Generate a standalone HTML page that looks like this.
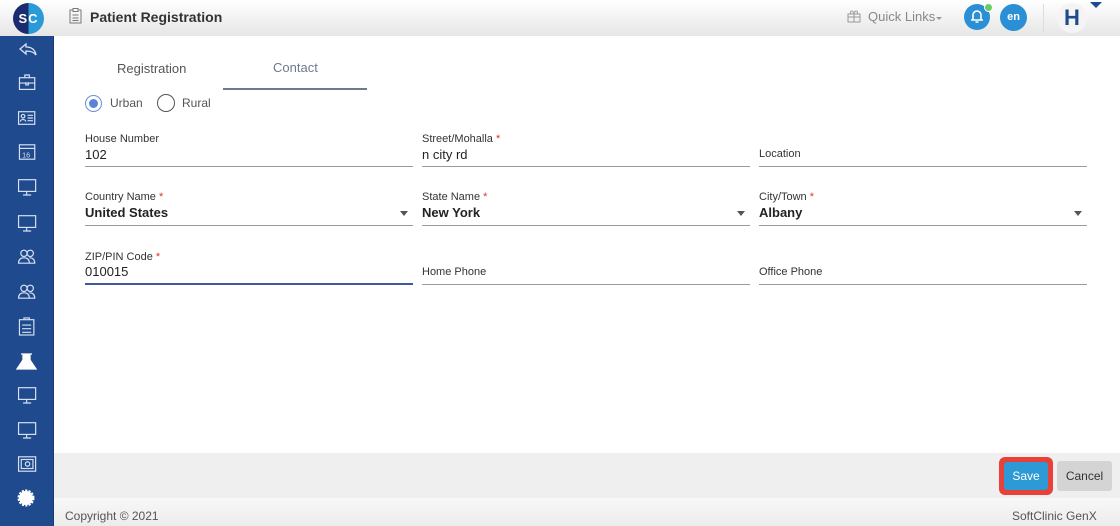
<html><head><style>
body{margin:0;width:1120px;height:526px;position:relative;overflow:hidden;font-family:"Liberation Sans",sans-serif;background:#fff}
.hdr{position:absolute;left:0;top:0;width:1120px;height:36px;background:linear-gradient(#fff,#e6e6e6)}
.side{position:absolute;left:0;top:36px;width:53px;height:490px;background:#1f4a8e;border-right:1px solid #173a72}
.lbl{position:absolute;font-size:11px;color:#333}
.val{position:absolute;font-size:13px;color:#222}
.ln{position:absolute;height:1px;background:#9a9a9a;width:328px}
.req{color:#d33}
.arr{position:absolute;width:0;height:0;border-left:4px solid transparent;border-right:4px solid transparent;border-top:5px solid #555}
</style></head><body>
<div class="hdr"></div>
<div style="position:absolute;left:13px;top:3px;width:31px;height:31px;border-radius:50%;background:linear-gradient(90deg,#1b2b6e 50%,#2a9bd8 50%);color:#fff;font-weight:bold;font-size:13px;line-height:31px;text-align:center;letter-spacing:1px">SC</div>
<svg style="position:absolute;left:69px;top:8px" width="14" height="16"><rect x="1" y="2" width="11" height="13" fill="none" stroke="#777"/><rect x="4" y="0.5" width="5" height="3" fill="#fff" stroke="#777"/><path d="M3.5 7h6M3.5 10h6M3.5 12.5h6" stroke="#777"/></svg>
<div style="position:absolute;left:90px;top:9px;font-size:14px;font-weight:bold;color:#333">Patient Registration</div>
<svg style="position:absolute;left:847px;top:9px" width="14" height="14"><rect x="1" y="5" width="12" height="8" fill="none" stroke="#999"/><path d="M1 8h12M7 5v8M4 5c-2-4 3-4 3 0c0-4 5-4 3 0" fill="none" stroke="#999"/></svg>
<div style="position:absolute;left:868px;top:9px;font-size:13px;color:#888">Quick Links</div>
<div class="arr" style="left:936px;top:17px;border-top-color:#999;border-width:3px 3px 0"></div>
<div style="position:absolute;left:964px;top:4px;width:26px;height:26px;border-radius:50%;background:#2a8fd4"></div>
<svg style="position:absolute;left:970px;top:9px" width="14" height="15"><path d="M3 11V6a4 4 0 0 1 8 0v5h2H1zM5.5 13h3" fill="none" stroke="#fff" stroke-width="1.6"/></svg>
<div style="position:absolute;left:984px;top:3px;width:7px;height:7px;border-radius:50%;background:#6c6;border:1px solid #fff"></div>
<div style="position:absolute;left:1000px;top:4px;width:27px;height:27px;border-radius:50%;background:#2a8fd4;color:#fff;font-size:11px;font-weight:bold;line-height:27px;text-align:center">en</div>
<div style="position:absolute;left:1043px;top:4px;width:1px;height:28px;background:#ddd"></div>
<div style="position:absolute;left:1057px;top:3px;width:30px;height:30px;border-radius:50%;background:#f4f4f4;color:#1f4a8e;font-size:22px;font-weight:bold;line-height:30px;text-align:center">H</div>
<div class="arr" style="left:1090px;top:2px;border-top-color:#1f4a8e;border-width:6px 6px 0"></div>
<div class="side"></div>
<svg style="position:absolute;left:0;top:36px" width="53" height="490" fill="none" stroke="#d8e2f2" stroke-width="1.3">
<path d="M20 13l6-5v3c5 0 9 2 10 8c-2-3-5-4-10-4v3z"/>
<g transform="translate(1,48) scale(0.9) translate(2.5,0)"><rect x="18" y="-7" width="17" height="13"/><path d="M18 -1h17M24 -7v-3h5v3M25 -2v3h3v-3"/></g>
<g transform="translate(1,82) scale(0.9) translate(2.5,0)"><rect x="17" y="-7" width="18" height="14"/><circle cx="22" cy="-2" r="2"/><path d="M19 4c0-3 6-3 6 0M27 -3h6M27 0h6M27 3h6"/></g>
<g transform="translate(1,116) scale(0.9) translate(2.5,0)"><rect x="18" y="-8" width="17" height="16"/><path d="M18 -4h17"/><text x="21" y="6" font-size="8" fill="#d8e2f2" stroke="none">16</text></g>
<g transform="translate(1,150) scale(0.9) translate(2.5,0)"><rect x="17" y="-7" width="19" height="13"/><path d="M26 6v4M22 10h9"/></g>
<g transform="translate(1,186) scale(0.9) translate(2.5,0)"><rect x="17" y="-7" width="19" height="13"/><path d="M26 6v4M22 10h9"/></g>
<g transform="translate(1,220) scale(0.9) translate(2.5,0)"><circle cx="23" cy="-3" r="3.5"/><circle cx="30" cy="-3" r="3.5"/><path d="M17 8c0-5 3-6 6-6s6 1 6 6zM29 2c3 0 6 1 6 6h-6"/></g>
<g transform="translate(1,255) scale(0.9) translate(2.5,0)"><circle cx="23" cy="-3" r="3.5"/><circle cx="30" cy="-3" r="3.5"/><path d="M17 8c0-5 3-6 6-6s6 1 6 6zM29 2c3 0 6 1 6 6h-6"/></g>
<g transform="translate(1,290) scale(0.9) translate(2.5,0)"><rect x="18" y="-7" width="16" height="17"/><path d="M23 -7v-2h6v2M21 -1h10M21 3h10M21 7h10"/></g>
<path d="M23 318v6l-6 9h19l-6-9v-6M21 318h11" fill="#fff" stroke="#fff"/>
<g transform="translate(1,358) scale(0.9) translate(2.5,0)"><rect x="17" y="-7" width="19" height="13"/><path d="M26 6v4M22 10h9"/></g>
<g transform="translate(1,393) scale(0.9) translate(2.5,0)"><rect x="17" y="-7" width="19" height="13"/><path d="M26 6v4M22 10h9"/></g>
<g transform="translate(1,428) scale(0.9) translate(2.5,0)"><rect x="17" y="-8" width="19" height="16"/><rect x="20" y="-5" width="13" height="10"/><circle cx="27" cy="0" r="2.5"/></g>
<circle cx="26" cy="462" r="7" fill="#fff" stroke="#fff" stroke-dasharray="2 1.2" stroke-width="3"/>
</svg>
<div style="position:absolute;left:117px;top:61px;font-size:13px;color:#555">Registration</div>
<div style="position:absolute;left:273px;top:60px;font-size:13px;color:#6c7a90">Contact</div>
<div style="position:absolute;left:223px;top:88px;width:144px;height:2px;background:#6c7a90"></div>
<div style="position:absolute;left:85px;top:95px;width:17px;height:17px;border:1.5px solid #6b8ed8;border-radius:50%;box-sizing:border-box"></div>
<div style="position:absolute;left:89px;top:99px;width:9px;height:9px;background:#5a84d8;border-radius:50%"></div>
<div style="position:absolute;left:110px;top:96px;font-size:12px;color:#555">Urban</div>
<div style="position:absolute;left:157px;top:94px;width:18px;height:18px;border:1.5px solid #555;border-radius:50%;box-sizing:border-box"></div>
<div style="position:absolute;left:182px;top:96px;font-size:12px;color:#555">Rural</div>

<div class="lbl" style="left:85px;top:133px">House Number</div><div class="val" style="left:85px;top:147px">102</div><div class="ln" style="left:85px;top:166px"></div>
<div class="lbl" style="left:422px;top:133px">Street/Mohalla <span class="req">*</span></div><div class="val" style="left:422px;top:147px">n city rd</div><div class="ln" style="left:422px;top:166px"></div>
<div class="lbl" style="left:759px;top:148px">Location</div><div class="ln" style="left:759px;top:166px"></div>

<div class="lbl" style="left:85px;top:191px">Country Name <span class="req">*</span></div><div class="val" style="left:85px;top:205px;font-weight:bold">United States</div><div class="arr" style="left:400px;top:211px"></div><div class="ln" style="left:85px;top:225px"></div>
<div class="lbl" style="left:422px;top:191px">State Name <span class="req">*</span></div><div class="val" style="left:422px;top:205px;font-weight:bold">New York</div><div class="arr" style="left:737px;top:211px"></div><div class="ln" style="left:422px;top:225px"></div>
<div class="lbl" style="left:759px;top:191px">City/Town <span class="req">*</span></div><div class="val" style="left:759px;top:205px;font-weight:bold">Albany</div><div class="arr" style="left:1074px;top:211px"></div><div class="ln" style="left:759px;top:225px"></div>

<div class="lbl" style="left:85px;top:251px">ZIP/PIN Code <span class="req">*</span></div><div class="val" style="left:85px;top:264px">010015</div><div class="ln" style="left:85px;top:283px;height:2px;background:#3e5a9a"></div>
<div class="lbl" style="left:422px;top:266px">Home Phone</div><div class="ln" style="left:422px;top:284px"></div>
<div class="lbl" style="left:759px;top:266px">Office Phone</div><div class="ln" style="left:759px;top:284px"></div>

<div style="position:absolute;left:54px;top:453px;width:1066px;height:45px;background:#efefef"></div>
<div style="position:absolute;left:999px;top:457px;width:54px;height:38px;border-radius:6px;background:#e8413a"></div>
<div style="position:absolute;left:1004px;top:462px;width:44px;height:28px;border-radius:3px;background:#2d9ad6;color:#fff;font-size:12px;line-height:28px;text-align:center">Save</div>
<div style="position:absolute;left:1057px;top:461px;width:55px;height:30px;border-radius:3px;background:#d4d4d4;color:#333;font-size:12px;line-height:30px;text-align:center">Cancel</div>
<div style="position:absolute;left:54px;top:498px;width:1066px;height:28px;background:linear-gradient(#f8f8f8,#ececec)"></div>
<div style="position:absolute;left:65px;top:509px;font-size:12px;color:#555">Copyright © 2021</div>
<div style="position:absolute;left:1012px;top:509px;font-size:12px;color:#555">SoftClinic GenX</div>
</body></html>
